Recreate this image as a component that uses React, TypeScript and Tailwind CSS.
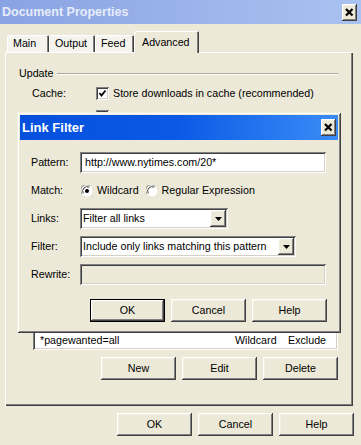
import React from 'react';

// classic 3D edges
const raised =
  'bg-[#ece9d8] shadow-[inset_-1px_-1px_#404040,inset_1px_1px_#ffffff,inset_-2px_-2px_#808080,inset_2px_2px_#f1efe2]';
const sunken =
  'shadow-[inset_1px_1px_#808080,inset_-1px_-1px_#ffffff,inset_2px_2px_#404040,inset_-2px_-2px_#d4d0c8]';

const CloseX = () => (
  <div className={`${raised} w-[15px] h-[17px] flex items-center justify-center`}>
    <svg width="15" height="17" viewBox="0 0 15 17">
      <path d="M4 5 L10.5 11.5 M10.5 5 L4 11.5" stroke="#000" strokeWidth={2.2} />
    </svg>
  </div>
);

const Button = ({ label, isDefault = false }: { label: string; isDefault?: boolean }) => (
  <button
    className={`${raised} w-[75px] h-[23px] flex items-center justify-center ${
      isDefault ? 'border border-black' : ''
    }`}
  >
    {label}
  </button>
);

const Checkbox = ({ checked }: { checked: boolean }) => (
  <div className={`${sunken} bg-white w-[13px] h-[13px] shrink-0`}>
    {checked && (
      <svg width="13" height="13" viewBox="0 0 13 13">
        <path d="M3.5 6 L5.5 8.5 L9.5 3.5" stroke="#000" strokeWidth={1.8} fill="none" />
      </svg>
    )}
  </div>
);

const Radio = ({ checked }: { checked: boolean }) => (
  <svg width="12" height="12" viewBox="0 0 12 12" className="shrink-0">
    <circle cx="6" cy="6" r="5.5" fill="#fff" />
    <path d="M1.2 9 A5.5 5.5 0 0 1 9 1.2" stroke="#808080" strokeWidth={1} fill="none" />
    <path d="M2.3 8.2 A4.3 4.3 0 0 1 8.2 2.3" stroke="#404040" strokeWidth={1} fill="none" />
    <path d="M3 11.2 A5.5 5.5 0 0 0 11.2 3" stroke="#e0ddd0" strokeWidth={1} fill="none" />
    {checked && <circle cx="6" cy="6" r="2" fill="#000" />}
  </svg>
);

const Select = ({ value, width }: { value: string; width: string }) => (
  <div className={`${sunken} ${width} h-[21px] bg-white flex items-center pl-[3px]`}>
    <span className="flex-1 whitespace-nowrap">{value}</span>
    <div className={`${raised} w-[16px] h-[17px] mr-[2px] flex items-center justify-center`}>
      <svg width="7" height="4" viewBox="0 0 7 4">
        <path d="M0 0 H7 L3.5 4 Z" fill="#000" />
      </svg>
    </div>
  </div>
);

const tabs = ['Main', 'Output', 'Feed'];
const tabWidths = ['w-[42px]', 'w-[46px]', 'w-[39px]'];

export default function App() {
  return (
    <div className="relative w-[361px] h-[445px] overflow-hidden bg-[#ece9d8] text-black text-[10.7px] leading-[13px] font-['Liberation_Sans','Arial',sans-serif]">
      {/* window title (inactive) */}
      <div className="h-[24px] flex items-center justify-between pl-[2px] pr-[4px] bg-gradient-to-r from-[#8aa3e3] to-[#a9c2f1]">
        <span className="text-[12.5px] font-bold text-[#e6ecfa]">Document Properties</span>
        <CloseX />
      </div>

      <div className="ml-[5px] w-[348px]">
        {/* tabs */}
        <div className="mt-[7px] h-[21px] flex items-end pl-[2px]">
          {tabs.map((t, i) => (
            <div
              key={t}
              className={`${tabWidths[i]} h-[17px] pl-[6px] flex items-center rounded-t-[2px] bg-[#f4f3ee] shadow-[inset_1px_1px_#ffffff,inset_-1px_0_#404040,inset_-2px_0_#808080]`}
            >
              {t}
            </div>
          ))}
          <div className="relative z-10 w-[65px] h-[22px] -mb-px pl-[8px] flex items-center rounded-t-[2px] bg-[#ece9d8] shadow-[inset_1px_1px_#ffffff,inset_-1px_0_#404040,inset_-2px_0_#808080]">
            Advanced
          </div>
        </div>

        {/* tab page */}
        <div className="h-[354px] flex flex-col pl-[14px] pr-[15px] pt-[15px] pb-[26px] shadow-[inset_1px_1px_#ffffff,inset_-1px_-1px_#404040,inset_-2px_-2px_#808080]">
          <div className="h-[13px] flex items-center">
            <span>Update</span>
            <div className="flex-1 ml-[4px] h-[2px] border-t border-[#aca899] border-b border-b-white" />
          </div>
          <div className="mt-[7px] h-[13px] flex items-center pl-[13px]">
            <span className="w-[64px]">Cache:</span>
            <Checkbox checked />
            <span className="ml-[4px]">Store downloads in cache (recommended)</span>
          </div>
          <div className="mt-[10px] h-[13px] flex items-center pl-[77px]">
            <Checkbox checked={false} />
          </div>

          <div className="flex-1" />

          <div className={`${sunken} ml-[14px] w-[305px] h-[80px] bg-white flex flex-col justify-end pb-[3px] pl-[7px]`}>
            <div className="h-[14px] flex items-center whitespace-nowrap">
              <span className="w-[195px]">*pagewanted=all</span>
              <span className="w-[53px]">Wildcard</span>
              <span>Exclude</span>
            </div>
          </div>

          <div className="mt-[7px] flex justify-end gap-[6px]">
            <Button label="New" />
            <Button label="Edit" />
            <Button label="Delete" />
          </div>
        </div>
      </div>

      <div className="mt-[7px] flex justify-end gap-[6px] pr-[7px]">
        <Button label="OK" />
        <Button label="Cancel" />
        <Button label="Help" />
      </div>

      {/* Link Filter dialog, floating over the properties window */}
      <div className="absolute left-[17px] top-[112px] w-[324px] h-[221px] p-[3px] bg-[#ece9d8] shadow-[inset_1px_1px_#f1efe2,inset_-1px_-1px_#404040,inset_2px_2px_#ffffff,inset_-2px_-2px_#808080]">
        <div className="h-[25px] flex items-center justify-between pl-[2px] pr-[2px] bg-gradient-to-r from-[#0550dc] via-[#0a5ae6] to-[#3a8cf6]">
          <span className="text-[13px] font-bold text-white">Link Filter</span>
          <CloseX />
        </div>

        <div className="pl-[11px] pt-[12px]">
          <div className="grid grid-cols-[49px_1fr] auto-rows-[21px] gap-y-[7px] items-center">
            <span>Pattern:</span>
            <div className={`${sunken} w-[246px] h-[21px] bg-white flex items-center pl-[5px]`}>
              http://www.nytimes.com/20*
            </div>

            <span>Match:</span>
            <div className="flex items-center pl-[1px]">
              <Radio checked />
              <span className="ml-[4px]">Wildcard</span>
              <span className="ml-[7px]">
                <Radio checked={false} />
              </span>
              <span className="ml-[4px]">Regular Expression</span>
            </div>

            <span>Links:</span>
            <Select value="Filter all links" width="w-[148px]" />

            <span>Filter:</span>
            <Select value="Include only links matching this pattern" width="w-[216px]" />

            <span>Rewrite:</span>
            <div className={`${sunken} w-[246px] h-[21px] bg-[#ece9d8]`} />
          </div>

          <div className="mt-[14px] flex justify-end gap-[6px] pr-[11px]">
            <Button label="OK" isDefault />
            <Button label="Cancel" />
            <Button label="Help" />
          </div>
        </div>
      </div>
    </div>
  );
}
